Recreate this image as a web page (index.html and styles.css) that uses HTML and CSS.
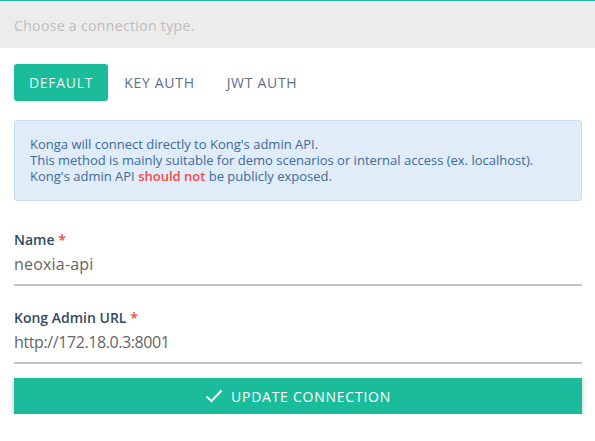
FILE: index.html
```html
<!DOCTYPE html>
<html>
<head>
<meta charset="utf-8">
<link rel="stylesheet" href="styles.css">
</head>
<body>
<div class="select-bar">Choose a connection type.</div>
<div class="content">
  <div class="tabs">
    <button class="tab active">DEFAULT</button>
    <button class="tab">KEY AUTH</button>
    <button class="tab">JWT AUTH</button>
  </div>
  <div class="info">
    <div class="line">Konga will connect directly to Kong's admin API.</div>
    <div class="line">This method is mainly suitable for demo scenarios or internal access (ex. localhost).</div>
    <div class="line">Kong's admin API <strong class="danger">should not</strong> be publicly exposed.</div>
  </div>
  <div class="field">
    <label class="label">Name <span class="req">*</span></label>
    <div class="value">neoxia-api</div>
  </div>
  <div class="field">
    <label class="label">Kong Admin URL <span class="req">*</span></label>
    <div class="value url">http://172.18.0.3:8001</div>
  </div>
  <button class="submit">
    <svg class="check" width="18" height="14" viewBox="0 0 18 14"><path d="M1.5 7.5 L6.5 12.2 L16.5 1.5" fill="none" stroke="#fff" stroke-width="2"/></svg>
    <span>UPDATE CONNECTION</span>
  </button>
</div>
</body>
</html>
```
FILE: styles.css
```css
* { box-sizing: border-box; }
body {
  margin: 0;
  background: #fff;
  font-family: "Open Sans", "DejaVu Sans", sans-serif;
  color: #34495e;
}
.select-bar {
  border-top: 1px solid #1abc9c;
  background: #ececec;
  height: 48px;
  padding-left: 14px;
  padding-top: 2px;
  display: flex;
  align-items: center;
  font-size: 14px;
  letter-spacing: 0.35px;
  color: #bcbcbc;
}
.content {
  padding: 16px 13px 0 14px;
}
.tabs {
  display: flex;
  height: 37px;
}
.tab {
  font-family: inherit;
  font-size: 14px;
  letter-spacing: 0.7px;
  border: 0;
  background: transparent;
  color: #5e6f87;
  padding: 0 16px;
  border-radius: 3px;
  cursor: pointer;
}
.tab.active {
  background: #1abc9c;
  color: #e6f7f3;
  padding: 0 15px;
}
.info {
  margin-top: 19px;
  background: #e0ecf7;
  border: 1px solid #c6dced;
  border-radius: 3px;
  padding: 15px 15px 16px;
  font-size: 13px;
  color: #3d6a9b;
}
.line { line-height: 16px; height: 16px; }
.danger { color: #f04a4a; font-weight: 600; }
.field {
  margin-top: 30px;
  border-bottom: 2px solid #c4c4c4;
}
.field + .field { margin-top: 23px; }
.label {
  display: block;
  font-size: 14px;
  font-weight: 600;
  color: #34495e;
  line-height: 18px;
}
.req { color: #f04a4a; }
.value {
  font-size: 16px;
  color: #666;
  line-height: 24px;
  padding: 3px 0 8px;
  letter-spacing: 0.2px;
}
.value.url { letter-spacing: -0.4px; }
.submit {
  margin-top: 14px;
  width: 100%;
  height: 36px;
  border: 0;
  background: #1abc9c;
  color: #fff;
  font-family: inherit;
  font-size: 14px;
  letter-spacing: 0.75px;
  display: flex;
  align-items: center;
  justify-content: center;
  gap: 8px;
  box-shadow: 0 2px 5px rgba(0,0,0,0.28);
}
```
